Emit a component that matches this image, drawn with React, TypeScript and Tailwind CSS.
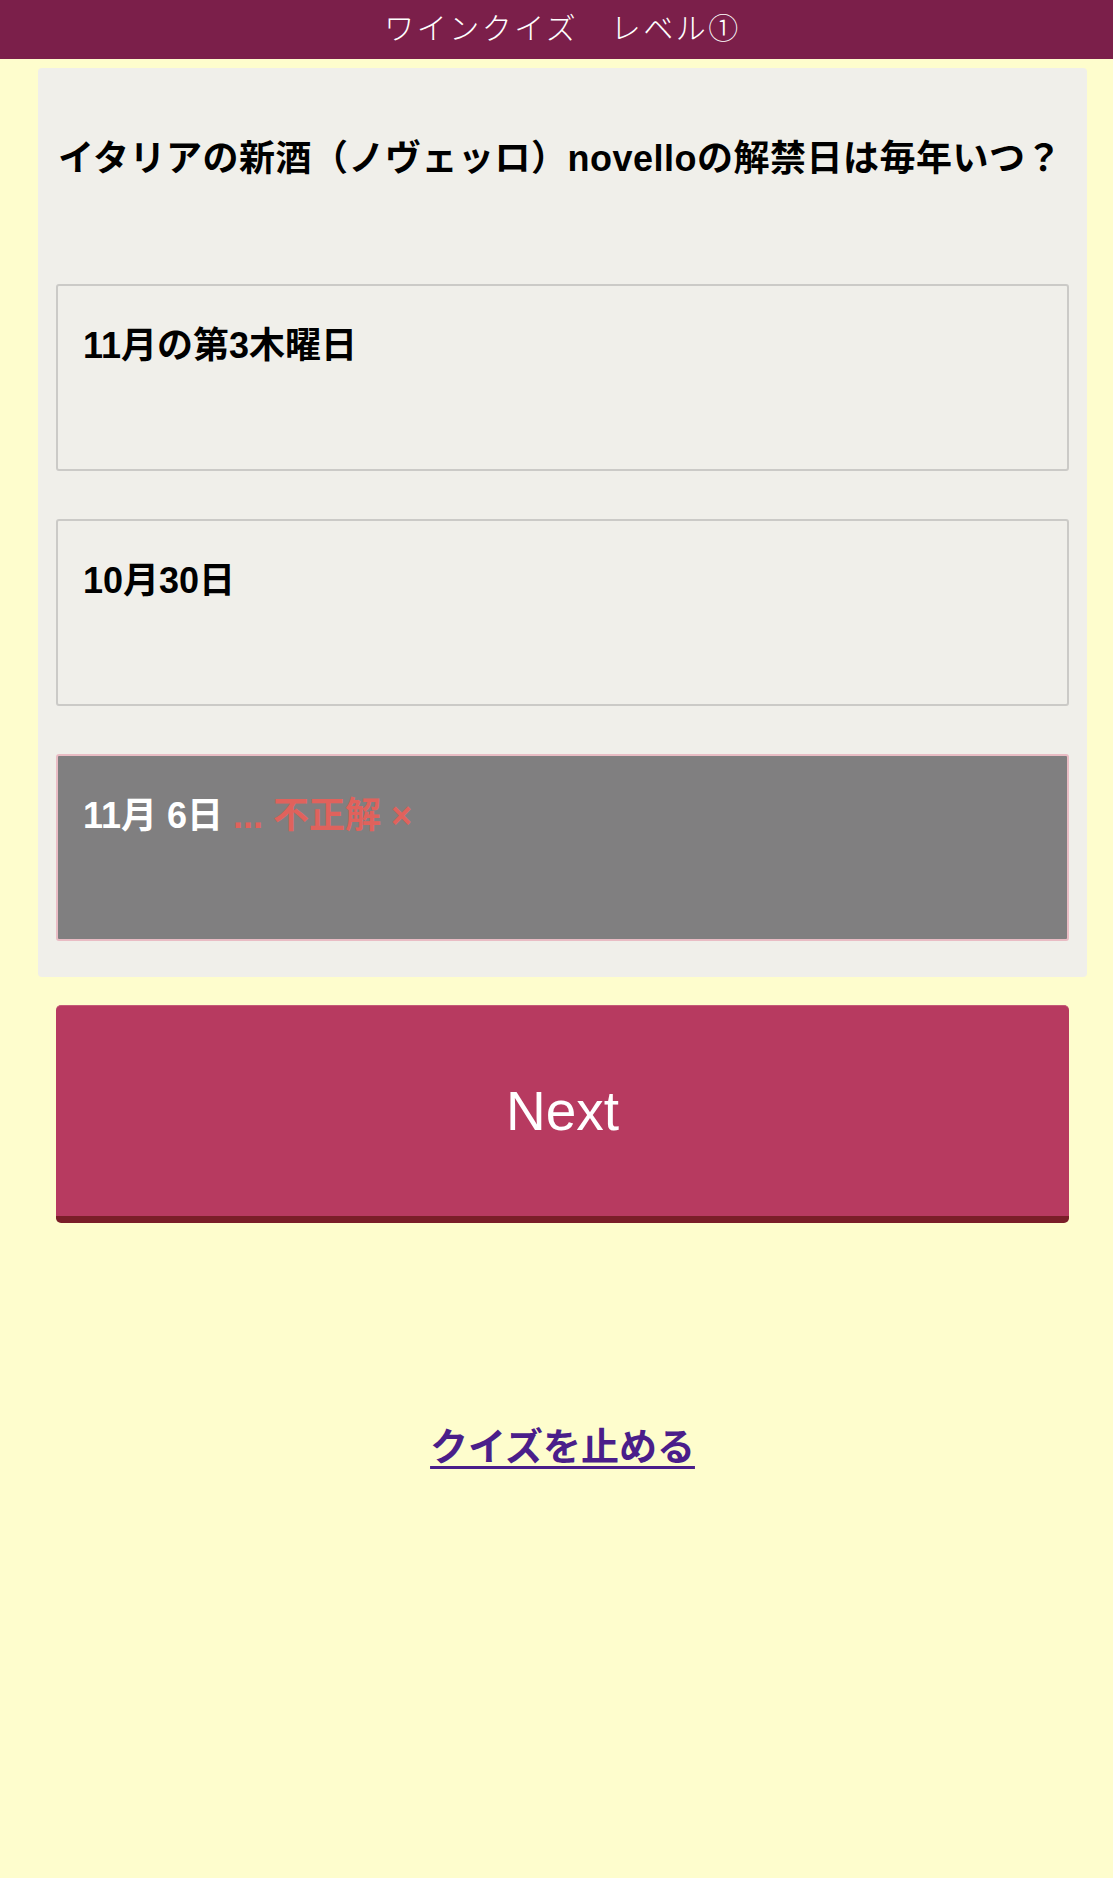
const font = { fontFamily: '"Liberation Sans", "Noto Sans CJK JP", sans-serif' };

type Choice = {
  label: string;
  wrong?: boolean;
};

const choices: Choice[] = [
  { label: '11月の第3木曜日' },
  { label: '10月30日' },
  { label: '11月 6日', wrong: true },
];

function ChoiceBox({ choice }: { choice: Choice }) {
  if (choice.wrong) {
    return (
      <div className="h-[187px] rounded-[3px] border-2 border-[#e9bcc4] bg-[#807f80] pl-[25px] pt-[33px]">
        <p className="text-[36px] leading-[54px] font-bold text-white">
          {choice.label}
          <span className="text-[#e0625c]"> ... 不正解 ×</span>
        </p>
      </div>
    );
  }
  return (
    <div className="h-[187px] rounded-[3px] border-2 border-[#cbcac7] bg-[#f0efea] pl-[25px] pt-[33px]">
      <p className="text-[36px] leading-[54px] font-bold text-black">{choice.label}</p>
    </div>
  );
}

export default function App() {
  return (
    <div className="min-h-screen bg-[#fefdcd]" style={font}>
      {/* ヘッダー */}
      <header className="h-[59px] bg-[#7b1f4a] pl-[12px] flex items-center justify-center">
        <h1
          className="text-[30px] leading-none font-light tracking-[2.5px] text-white pb-[8px]"
          style={{ fontFamily: '"Noto Sans CJK JP", sans-serif' }}
        >
          ワインクイズ　レベル①
        </h1>
      </header>

      <main className="pl-[12px]">
        {/* 問題パネル */}
        <section className="mx-[26px] mt-[9px] rounded-[4px] bg-[#f0efea] px-[18px] pt-[64px] pb-[36px]">
          <h2 className="pl-[2px] text-[36px] leading-[54px] font-bold text-black tracking-[0.5px]">
            イタリアの新酒（ノヴェッロ）novelloの解禁日は毎年いつ？
          </h2>
          <div className="mt-[98px] flex flex-col gap-[48px]">
            {choices.map((c) => (
              <ChoiceBox key={c.label} choice={c} />
            ))}
          </div>
        </section>

        {/* 次へボタン */}
        <div className="mx-[44px] mt-[28px]">
          <button
            type="button"
            className="w-full h-[218px] rounded-[5px] border-t border-[#c45a78] border-b-[7px] border-b-[#7a1e28] bg-[#b73a60] text-[55px] text-white"
            style={{ fontFamily: '"Liberation Sans", sans-serif' }}
          >
            Next
          </button>
        </div>

        {/* クイズ終了リンク */}
        <div className="mx-[44px] mt-[197px] text-center">
          <a
            href="#"
            className="text-[38px] leading-[54px] font-bold text-[#4a1e8a] underline decoration-[3px] underline-offset-[6px]"
          >
            クイズを止める
          </a>
        </div>
      </main>
    </div>
  );
}
